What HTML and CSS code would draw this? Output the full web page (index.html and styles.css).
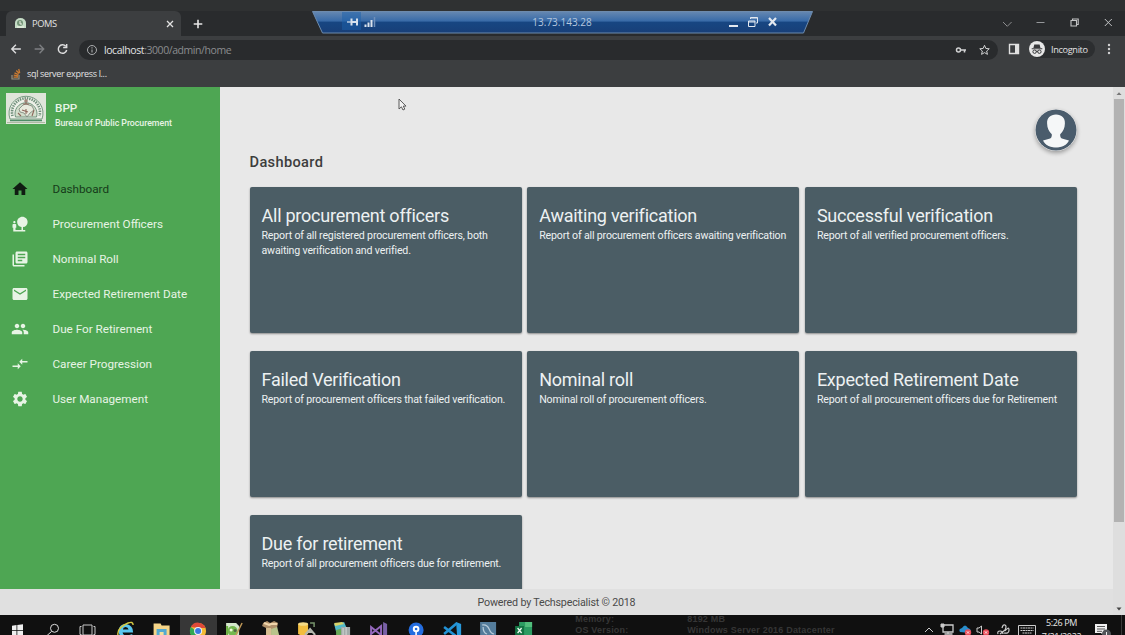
FILE: index.html
```
<!DOCTYPE html>
<html lang="en">
<head>
<meta charset="utf-8">
<title>POMS</title>
<link rel="stylesheet" href="styles.css">
</head>
<body>
<div class="desktop">
  <header class="browser">
    <div class="tabstrip">
      <div class="tab">
        <svg class="favicon" viewBox="0 0 11 11"><path d="M0 10V5a5.500 5 0 0 1 11 0v5z" fill="#c5dcc6"/><circle cx="5" cy="5" r="3" fill="#739477"/><path d="M5 3v3h2M2 9h7" stroke="#f2f5e9" fill="none"/></svg>
        <span class="tab-title">POMS</span>
        <svg class="tab-close" viewBox="0 0 8 8"><path d="M1 1l6 6M7 1L1 7" stroke="#e3e3e3" stroke-width="1.300"/></svg>
      </div>
      <svg class="new-tab" viewBox="0 0 10 10"><path d="M5 .7v8.600M.7 5h8.600" stroke="#e6e6e6" stroke-width="1.600"/></svg>
      <svg class="window-controls" viewBox="0 0 112 14" fill="none" stroke="#c4c5c6"><path d="M3 5l4.300 4.300L11.600 5" stroke="#8c8d8f"/><path d="M36.500 5.500h8" stroke="#95979a"/><path d="M71 3.500h5.500V9h-5.500zM72.500 3.500V2h5.700v5.500H76.500" stroke-width="1.100"/><path d="M104.800 2l7 7m0-7l-7 7"/></svg>
    </div>
    <div class="toolbar">
      <svg class="nav" viewBox="0 0 70 16" fill="none" stroke="#dededf" stroke-width="1.400"><path d="M11 8H2m4-4.200L1.800 8 6 12.200"/><path d="M25 8h9m-4-4.200L34.200 8 30 12.200" stroke="#7d7f82"/><path d="M56.500 5.200A4.300 4.300 0 1 0 57.500 9M57.500 3v3.500h-3.600" stroke-width="1.500"/></svg>
      <div class="omnibox">
        <svg class="info" viewBox="0 0 12 12"><circle cx="6" cy="6" r="4.500" fill="none" stroke="#a9abad"/><path d="M6 5.400v3M6 3.200v1.200" stroke="#a9abad" stroke-width="1.100"/></svg>
        <span class="url">localhost<span class="path">:3000/admin/home</span></span>
        <svg class="box-icons" viewBox="0 0 36 12" fill="none" stroke="#d1d2d3"><circle cx="3.500" cy="6" r="2" stroke-width="1.500"/><path d="M5.500 6H11M9.500 6v2.500" stroke-width="1.600"/><path d="M29.500 1.300l1.350 3.150 3.400.3-2.600 2.250.8 3.350-2.950-1.750-2.950 1.750.8-3.350-2.600-2.250 3.400-.3z"/></svg>
      </div>
      <svg class="side-panel" viewBox="0 0 12 12"><path d="M1.500 1.500h9v9h-9z" fill="none" stroke="#e1e1e1" stroke-width="1.400"/><path d="M7 1h4v10H7z" fill="#e1e1e1"/></svg>
      <div class="incognito">
        <svg viewBox="0 0 16 16"><circle cx="8" cy="8" r="8" fill="#e7e7e7"/><path d="M5.300 3.500l5.300 0 .9 3.600H4.400zM2.700 7.300h10.600v1H2.700z" fill="#38393b"/><circle cx="5.600" cy="10.700" r="1.700" fill="none" stroke="#38393b"/><circle cx="10.400" cy="10.700" r="1.700" fill="none" stroke="#38393b"/><path d="M7 10.300h2" stroke="#38393b"/></svg>
        <span>Incognito</span>
      </div>
      <svg class="more" viewBox="0 0 4 12" fill="#d2d2d3"><circle cx="2" cy="2" r="1.200"/><circle cx="2" cy="6" r="1.200"/><circle cx="2" cy="10" r="1.200"/></svg>
    </div>
    <div class="bookmarks">
      <svg viewBox="0 0 10 12"><path d="M1 7v4h7V7" fill="none" stroke="#98917f" stroke-width="1.200"/><path d="M2.500 9.200h4.500M2.700 7.200l4.400.6M3.500 4.800l4 1.900M5.300 2.500l3 3M7.700 1l1 4" stroke="#cc7b31" stroke-width="1.300"/></svg>
      <span>sql server express l...</span>
    </div>
  </header>

  <div class="remote-bar">
    <svg class="remote-shape" viewBox="0 0 502 23"><defs><linearGradient id="glass" x2="0" y2="1"><stop offset="0" stop-color="#6688b1"/><stop offset=".44" stop-color="#396ba8"/><stop offset=".5" stop-color="#174682"/><stop offset="1" stop-color="#183f78"/></linearGradient></defs><path d="M.5.5h500L491.500 22H10.500z" fill="url(#glass)" stroke="#6d8bad"/><path d="M30 1h19v18H30z" fill="#1c5fa9" opacity=".5"/></svg>
    <svg class="remote-left" viewBox="0 0 32 14"><path d="M1 7h4" stroke="#d8e2ed" stroke-width="1.200"/><path d="M5.500 3.500v7M6 7h5M11 3.500v7" stroke="#d8e2ed" stroke-width="2" fill="none"/><path d="M19.500 12V9.500M22.500 12V7.500M25.500 12V5" stroke="#dbe3ed" stroke-width="2"/><path d="M28.500 12V2" stroke="#6f8fb9" stroke-width="1.500"/></svg>
    <span class="remote-ip">13.73.143.28</span>
    <svg class="remote-right" viewBox="0 0 50 14" fill="none" stroke="#e2e8f0"><path d="M1 11h9" stroke-width="2"/><path d="M20.500 6h6.500v5.500h-6.500zM20.500 7h6.500M22.500 4V2.500H29.500V8H28M22.500 3h7"/><path d="M41 3l7 7.500M48 3l-7 7.500" stroke-width="2.200"/></svg>
  </div>

  <div class="page">
    <aside class="sidebar">
      <div class="brand">
        <svg class="crest" viewBox="0 0 40 31"><path d="M0 0h40v31H0z" fill="#dfe5da"/><path d="M4 26A17 17 0 1 1 36 26z" fill="#edf0e8" stroke="#789b83"/><path d="M6.500 23A14 14 0 1 1 33.500 23" fill="none" stroke="#708f7b" stroke-width="2.600" stroke-dasharray="1.400 1"/><path d="M9.500 24A11 11 0 1 1 30.500 24z" fill="#d2ddcb" stroke="#598269" stroke-width=".8"/><path d="M13 16l4-4 3-1 6 2 2 4-4 3-3 4-3-4-4-1z" fill="#e8eadd" stroke="#6b766b" stroke-width=".7"/><path d="M20 6v5M17 11h6M18 8h4M12 20l3 3M28 17l-2 6M20 16v5M16 17l6 2" stroke="#8d675b" stroke-width="1.100"/><path d="M4 27.500h32" stroke="#4f8d67" stroke-width="1.500"/><path d="M1 29.500h38" stroke="#aebaa3"/></svg>
        <div class="brand-text"><strong>BPP</strong><span>Bureau of Public Procurement</span></div>
      </div>
      <nav class="menu">
        <a class="item active"><svg viewBox="0 0 24 24"><path d="M10 20v-6h4v6h5v-8h3L12 3 2 12h3v8z"/></svg><span>Dashboard</span></a>
        <a class="item"><svg viewBox="0 0 24 24"><path d="M22.170 9.170c0-3.870-3.130-7-7-7s-7 3.130-7 7c0 3.470 2.520 6.340 5.830 6.890V20H6v-3h1v-4c0-.55-.45-1-1-1H3c-.55 0-1 .45-1 1v4h1v5h16v-2h-3v-3.880c3.470-.41 6.170-3.360 6.170-6.950zM4.500 11c.83 0 1.500-.67 1.500-1.500S5.330 8 4.500 8 3 8.670 3 9.500 3.670 11 4.500 11z"/></svg><span>Procurement Officers</span></a>
        <a class="item"><svg viewBox="0 0 24 24"><path d="M4 6H2v14c0 1.100.9 2 2 2h14v-2H4V6zm16-4H8c-1.100 0-2 .9-2 2v12c0 1.100.9 2 2 2h12c1.100 0 2-.9 2-2V4c0-1.100-.9-2-2-2zm-1 9H9V9h10v2zm-4 4H9v-2h6v2zm4-8H9V5h10v2z"/></svg><span>Nominal Roll</span></a>
        <a class="item"><svg viewBox="0 0 24 24"><path d="M20 4H4c-1.100 0-2 .9-2 2v12c0 1.100.9 2 2 2h16c1.100 0 2-.9 2-2V6c0-1.100-.9-2-2-2zm0 4l-8 5-8-5V6l8 5 8-5v2z"/></svg><span>Expected Retirement Date</span></a>
        <a class="item"><svg viewBox="0 0 24 24"><path d="M16 11c1.660 0 2.990-1.340 2.990-3S17.660 5 16 5s-3 1.340-3 3 1.340 3 3 3zm-8 0c1.660 0 2.990-1.340 2.990-3S9.660 5 8 5 5 6.340 5 8s1.340 3 3 3zm0 2c-2.330 0-7 1.170-7 3.500V19h14v-2.500c0-2.330-4.670-3.500-7-3.500zm8 0c-.29 0-.62.02-.97.05 1.160.84 1.970 1.970 1.970 3.450V19h6v-2.500c0-2.330-4.670-3.500-7-3.500z"/></svg><span>Due For Retirement</span></a>
        <a class="item"><svg viewBox="0 0 24 24"><path d="M9.010 14H2v2h7.010v3L13 15l-3.990-4v3zm5.980-1v-3H22V8h-7.010V5L11 9l3.990 4z"/></svg><span>Career Progression</span></a>
        <a class="item"><svg viewBox="0 0 24 24"><path d="M19.140 12.940c.04-.3.06-.61.06-.94 0-.32-.02-.64-.07-.94l2.030-1.580c.18-.14.23-.41.12-.61l-1.920-3.320c-.12-.22-.37-.29-.59-.22l-2.390.96c-.5-.38-1.030-.7-1.620-.94l-.36-2.540c-.04-.24-.24-.41-.48-.41h-3.840c-.24 0-.43.17-.47.41l-.36 2.540c-.59.24-1.130.57-1.620.94l-2.390-.96c-.22-.08-.47 0-.59.22L2.740 8.870c-.12.21-.08.47.12.61l2.030 1.580c-.05.3-.09.63-.09.94s.02.64.07.94l-2.030 1.580c-.18.14-.23.41-.12.61l1.920 3.320c.12.22.37.29.59.22l2.390-.96c.5.38 1.030.7 1.620.94l.36 2.540c.05.24.24.41.48.41h3.840c.24 0 .44-.17.47-.41l.36-2.540c.59-.24 1.130-.56 1.620-.94l2.390.96c.22.08.47 0 .59-.22l1.920-3.320c.12-.22.07-.47-.12-.61l-2.010-1.580zM12 15.600c-1.980 0-3.600-1.620-3.600-3.600s1.620-3.600 3.600-3.600 3.600 1.620 3.600 3.600-1.620 3.600-3.600 3.600z"/></svg><span>User Management</span></a>
      </nav>
    </aside>
    <main class="content">
      <svg class="avatar" viewBox="0 0 42 42"><defs><clipPath id="disc"><circle cx="21" cy="21" r="18"/></clipPath></defs><circle cx="21" cy="21" r="20.500" fill="#4a5c6c"/><path clip-path="url(#disc)" d="M21 5.500c-5.700 0-9.300 3.600-8.900 9 .1 4.400 1.700 8.100 4.700 10.700.2 2.400-.4 3.800-2.500 4.600L8 31.500C10 36 15 38.500 21 38.500s11-2.500 13-7l-6.300-1.700c-2.100-.8-2.700-2.200-2.500-4.600 3-2.600 4.600-6.300 4.700-10.700.4-5.400-3.200-9-8.900-9z" fill="#f5f7f8"/></svg>
      <h1>Dashboard</h1>
      <section class="cards">
        <article class="card"><h2>All procurement officers</h2><p>Report of all registered procurement officers, both awaiting verification and verified.</p></article>
        <article class="card"><h2>Awaiting verification</h2><p>Report of all procurement officers awaiting verification</p></article>
        <article class="card"><h2>Successful verification</h2><p>Report of all verified procurement officers.</p></article>
        <article class="card"><h2>Failed Verification</h2><p>Report of procurement officers that failed verification.</p></article>
        <article class="card"><h2>Nominal roll</h2><p>Nominal roll of procurement officers.</p></article>
        <article class="card"><h2>Expected Retirement Date</h2><p>Report of all procurement officers due for Retirement</p></article>
        <article class="card"><h2>Due for retirement</h2><p>Report of all procurement officers due for retirement.</p></article>
      </section>
    </main>
    <div class="scrollbar">
      <svg viewBox="0 0 12 12"><path d="M3.500 8L6 5.200 8.500 8z" fill="#777"/></svg>
      <div class="thumb"></div>
      <svg class="down" viewBox="0 0 12 12"><path d="M3.500 4.500h5L6 7.500z" fill="#444"/></svg>
    </div>
    <footer class="footer">Powered by Techspecialist © 2018</footer>
  </div>

  <div class="taskbar">
    <svg class="sys" viewBox="0 0 35 20"><path d="M12 10.700l4.500-.6v5H12zm5.300-.7l5.700-.8v5.900h-5.700zM12 15.800h4.500V21l-4.500-.7zm5.300 0H23V21.500l-5.700-.7z" fill="#eee"/></svg>
    <svg class="sys" viewBox="0 0 35 20"><circle cx="19.500" cy="13.300" r="4" fill="none" stroke="#ddd"/><path d="M16.500 16.500L11.500 21" stroke="#ddd"/></svg>
    <svg class="sys" viewBox="0 0 35 20" fill="none" stroke="#c8c8c8"><path d="M13 10h9v10h-9zM11.500 11.500h-1.500v8h1.500M23.500 11.500H25v8h-1.500"/></svg>
    <svg class="app first" viewBox="0 0 36 20"><path d="M25 17.500H14.500q.5 3.500 5 3l5-1.500q-2 4-7 4-7-1-7-7Q11 9 18 9q7 1 7 8.500zM14.800 14.500h5.700q-.5-2.500-3-2.500t-2.700 2.500z" fill="#5ac7f0" fill-rule="evenodd"/><path d="M10 21Q8 13 20 8q5-2 5 2" fill="none" stroke="#d5c842" stroke-width="1.400"/></svg>
    <svg class="app" viewBox="0 0 36 20"><path d="M9.500 8.500h7l1 2h8V20h-16z" fill="#f5d588"/><path d="M12.500 20v-6h10v6" fill="#54a9d1"/><path d="M15.500 20v-3h4v3z" fill="#f4df9c"/></svg>
    <svg class="app running" viewBox="0 0 36 20"><circle cx="18" cy="16" r="8" fill="#f3ba35"/><path d="M10.800 12A8 8 0 0 1 25.500 13H18z" fill="#df4938"/><path d="M10.800 12A8 8 0 0 0 14 23l3-6z" fill="#32a852"/><circle cx="18" cy="16" r="4" fill="#eef2fc"/><circle cx="18" cy="16" r="3" fill="#3b79e0"/></svg>
    <svg class="app" viewBox="0 0 36 20"><path d="M9 8h10l3 3v10H9z" fill="#d5e8cb"/><path d="M9 11h2v9H9z" fill="#6aae40"/><circle cx="15.500" cy="16" r="5" fill="#74b84f"/><circle cx="14" cy="15" r="1.500" fill="#effad9"/><circle cx="18" cy="15.500" r="1.500" fill="#556545"/><path d="M19 20l6-12" stroke="#c09857" stroke-width="1.500"/></svg>
    <svg class="app" viewBox="0 0 36 20"><path d="M10 8l4-2 3 2 4-2 4 2-1 4v9H13v-8l-4-2z" fill="#b0906a"/><path d="M11 8l5 2 2-1 6 0" stroke="#f0d5ab" stroke-width="2" fill="none"/><path d="M13 13h5v7h-5z" fill="#d6bd91"/><path d="M18 14l6-2 2 8h-8z" fill="#b8c38b"/></svg>
    <svg class="app" viewBox="0 0 36 20"><path d="M9 9v10q5 3 10 0V9z" fill="#f2bd3e"/><ellipse cx="14" cy="9" rx="5" ry="1.800" fill="#f5da86"/><path d="M21 8h4v4" stroke="#76936b" stroke-width="1.500" fill="none"/><path d="M16 20l5-6 5 6M18 17h6" stroke="#b5b7ae" stroke-width="2" fill="none"/></svg>
    <svg class="app" viewBox="0 0 36 20"><path d="M9 9l10-2 3 7-11 3z" fill="#53bac7"/><path d="M9 8l8-1 2 2-9 2z" fill="#d8d267"/><path d="M11 15l7-2v7h-7z" fill="#68aa59"/><path d="M16 12h9v9h-9z" fill="#a3abaa"/><path d="M18 13v7M21 12v8" stroke="#d2d7d5"/></svg>
    <svg class="app" viewBox="0 0 36 20"><path d="M22 7l4 2v12h-4z" fill="#7860a6"/><path d="M10 12v7l10-8v9z" fill="none" stroke="#9367bb" stroke-width="2"/></svg>
    <svg class="app" viewBox="0 0 36 20"><circle cx="18" cy="15" r="7.500" fill="#246de0"/><circle cx="18" cy="14" r="2.300" fill="none" stroke="#fff" stroke-width="2"/><path d="M18 16v4" stroke="#fff" stroke-width="1.600"/></svg>
    <svg class="app" viewBox="0 0 36 20"><path d="M22 7l5 2v12h-4z" fill="#2999da"/><path d="M10 12l13 10M10 19L23 8" stroke="#2292d5" stroke-width="2.600"/></svg>
    <svg class="app" viewBox="0 0 36 20"><path d="M10 7h16v14H10z" fill="#547c9b"/><path d="M12 10q5-1 7 4t5 5M13 12q0 6 4 7" fill="none" stroke="#b8ccda" stroke-width="1.200"/></svg>
    <svg class="app" viewBox="0 0 36 20"><path d="M13 7h13v14H13z" fill="#2c9c62"/><path d="M19 7h7v5h-7z" fill="#52be7c"/><path d="M9 11h9v9H9z" fill="#147443"/><path d="M11.500 13l4 5m0-5l-4 5" stroke="#edf8ef" stroke-width="1.300"/></svg>
    <div class="wall-info"><span>Memory:</span><span>8192 MB</span><span>OS Version:</span><span>Windows Server 2016 Datacenter</span></div>
    <svg class="tray" viewBox="0 0 125 20" fill="none" stroke="#ccc"><path d="M10 17l4-4 4 4"/><path d="M28 10h10v7H28zM29.500 19h8M33 17v2" stroke-width="1.300"/><path d="M26 9h3v3h-3z" fill="#ccc"/><path d="M45 17q-2-3 2-4 3-5 6 0 4 1 2 5z" fill="#288dcc" stroke="none"/><circle cx="53" cy="17.500" r="3.200" fill="#e94e5a" stroke="none"/><path d="M51.800 16.300l2.400 2.400m0-2.400l-2.400 2.400" stroke="#fff" stroke-width=".8"/><path d="M62 13h2l2.500-2v8L64 17h-2z"/><circle cx="71" cy="17.500" r="3.200" fill="#e94e5a" stroke="none"/><path d="M69.800 16.300l2.400 2.400m0-2.400l-2.400 2.400" stroke="#fff" stroke-width=".8"/><path d="M83 19q-1-3 2-3t3 3M87 13q1-4 3-3t0 5l-5 4M90 16q4-5 4-1t-5 3" stroke-width="1.200"/><path d="M103.500 10.500h17v10h-17z"/><path d="M105.500 13h13M105.500 15.500h13M107.500 18h9" stroke-dasharray="2 .5"/></svg>
    <div class="clock"><span>5:26 PM</span><span>7/21/2022</span></div>
    <svg class="notify" viewBox="0 0 36 20"><path d="M9 9h12v9h-3v3l-3-3H9z" fill="#f0f0f0"/><path d="M11 11.500h8M11 14h8M11 16.300h5" stroke="#555"/><circle cx="20.500" cy="19" r="4.500" fill="#53565a"/><path d="M20.500 17v3" stroke="#eee"/><path d="M35.500 0v20" stroke="#3a3a3a"/></svg>
  </div>

  <svg class="cursor" viewBox="0 0 9 14"><path d="M1 1v10l2.400-2.200L5 12l1.800-.9-1.500-3H8z" fill="#f3f3f3" stroke="#4b4b4b" stroke-width=".9"/></svg>
</div>
</body>
</html>
```
FILE: styles.css
```
* { box-sizing: border-box; }
body { margin: 0; overflow: hidden; font-family: Roboto, "Liberation Sans", sans-serif; }
svg { display: block; flex: none; }
.desktop { position: relative; width: 1125px; height: 635px; overflow: hidden; display: flex; flex-direction: column; }

.browser { height: 87px; flex: none; background: #3c3e40; border-top: 11px solid #2f3132; font-family: "Open Sans", "Noto Sans", sans-serif; color: #e2e2e3; }
.tabstrip { height: 25px; background: #292b2d; display: flex; align-items: center; padding-left: 6px; }
.tab { width: 175px; height: 25px; background: #3c3e40; border-radius: 6px 6px 0 0; display: flex; align-items: center; padding: 0 7.500px 0 9px; }
.favicon { width: 11px; height: 11px; }
.tab-title { font-size: 9.3px; margin-left: 6px; flex: 1; letter-spacing: -.4px; }
.tab-close { width: 8px; height: 8px; }
.new-tab { width: 10px; height: 10px; margin-left: 11.500px; }
.window-controls { width: 112px; height: 14px; margin-left: auto; margin-right: 13px; }
.toolbar { height: 26px; display: flex; align-items: center; padding-left: 10px; }
.nav { width: 69px; height: 16px; }
.omnibox { width: 919px; height: 20px; border-radius: 10px; background: #292b2d; display: flex; align-items: center; padding: 0 7px 0 7px; margin-top: 1px; }
.info { width: 12px; height: 12px; }
.url { font-size: 10.5px; margin-left: 6px; line-height: 16px; letter-spacing: -.43px; }
.path { color: #8b8d8f; }
.box-icons { width: 36px; height: 12px; margin-left: auto; }
.side-panel { width: 12px; height: 12px; margin-left: 10px; }
.incognito { width: 66px; height: 18px; border-radius: 9px; background: #2c2e30; display: flex; align-items: center; gap: 6px; margin-left: 9px; font-size: 9.2px; letter-spacing: -.35px; }
.incognito svg { width: 16px; height: 16px; }
.more { width: 4px; height: 12px; margin-left: 12px; }
.bookmarks { height: 23px; display: flex; align-items: center; gap: 6px; padding-left: 11px; font-size: 9px; letter-spacing: -.33px; }
.bookmarks svg { width: 10px; height: 12px; }

.remote-bar { position: absolute; left: 312px; top: 11px; width: 502px; height: 23px; display: flex; align-items: center; justify-content: space-between; padding: 0 36px 2px 34px; color: #b6c8df; }
.remote-shape { position: absolute; left: 0; top: 0; width: 502px; height: 23px; }
.remote-left { position: relative; width: 32px; height: 14px; }
.remote-ip { position: relative; font: 10px "Open Sans", sans-serif; padding-top: 1px; margin-left: 18px; }
.remote-right { position: relative; width: 50px; height: 14px; }

.page { height: 528px; flex: none; display: grid; grid-template-columns: 219.500px 893.500px 12px; grid-template-rows: 502px 26px; background: #e8e8e8; }
.sidebar { background: #4ea653; color: #e7f4e5; }
.brand { display: flex; padding: 6px 0 0 6px; height: 84px; gap: 9px; }
.crest { width: 40px; height: 31px; }
.brand-text { display: flex; flex-direction: column; padding-top: 7.500px; }
.brand-text strong { font-size: 11.7px; line-height: 14px; font-weight: 500; }
.brand-text span { font-size: 8.8px; line-height: 16px; font-weight: 500; letter-spacing: -.04px; }
.item { height: 35.150px; display: flex; align-items: center; padding-left: 11.300px; gap: 23.200px; font-size: 11.7px; }
.item svg { width: 18px; height: 18px; fill: currentColor; }
.active { color: #163b1a; }
.active svg { fill: #101c12; }
.content { overflow: hidden; padding: 22px 36px 0 30px; }
.avatar { width: 42px; height: 42px; margin-left: auto; border-radius: 50%; box-shadow: 0 2px 4px #0005; }
h1 { margin: 0; padding-top: 2px; height: 36px; font-size: 14.6px; line-height: 18px; font-weight: 500; color: #3d3d3d; letter-spacing: .35px; }
.cards { display: grid; grid-template-columns: repeat(3, 272px); gap: 18px 5.700px; grid-auto-rows: 146.200px; }
.card { background: #4b5d65; border-radius: 2px; padding: 18px 12px; color: #edf1f2; box-shadow: 0 1px 2px #0006; }
.card h2 { margin: 0; font-size: 18px; line-height: 22px; font-weight: 400; white-space: nowrap; letter-spacing: -.24px; }
.card p { margin: 1px -2px 0 0; font-size: 10.6px; line-height: 15px; letter-spacing: -.17px; }
.scrollbar { grid-row: 1 / 3; grid-column: 3; background: #dedede; display: flex; flex-direction: column; align-items: center; }
.scrollbar svg { width: 12px; height: 12px; }
.thumb { width: 10px; height: 423px; background: #b2b2b2; }
.scrollbar .down { margin-top: auto; }
.footer { grid-row: 2; grid-column: 1 / 3; background: #e0e0e0; color: #4a4a4a; text-align: center; font-size: 10.7px; line-height: 27px; letter-spacing: -.19px; }

.taskbar { height: 20px; flex: none; background: #101010; display: flex; overflow: hidden; }
.sys { width: 35px; height: 20px; }
.app { width: 36.200px; height: 20px; }
.first { margin-left: 3px; }
.running { background: #373737; }
.wall-info { display: grid; grid-template-columns: 112px 200px; grid-auto-rows: 10.500px; margin-left: 33px; color: #363636; font: bold 9px/9px "Liberation Sans", sans-serif; letter-spacing: .2px; white-space: nowrap; }
.tray { width: 125px; height: 20px; margin-left: auto; }
.clock { width: 51px; display: flex; flex-direction: column; align-items: center; padding-top: 1px; margin-left: -4px; color: #e8e8e8; font: 9px/14px "Open Sans", sans-serif; letter-spacing: -.35px; }
.clock span { flex: none; height: 14px; }
.notify { width: 36px; height: 20px; margin-left: -1px; margin-right: 3px; }
.cursor { position: absolute; left: 398px; top: 98px; width: 9px; height: 14px; }
```
